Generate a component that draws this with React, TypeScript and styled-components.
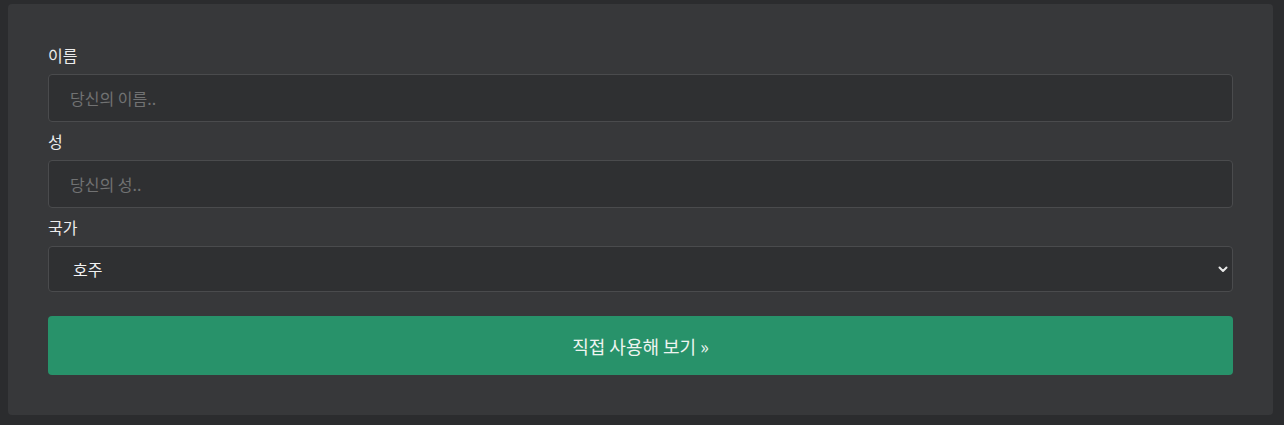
import styled, { createGlobalStyle } from "styled-components";

const GlobalStyle = createGlobalStyle`
  html, body {
    margin: 0;
    background: #2b2c2e;
  }
  body {
    padding: 4px 11px 0 8px;
    font-family: "Noto Sans CJK KR", "Noto Sans", sans-serif;
  }
`;

const Card = styled.form`
  background: #37383a;
  border-radius: 4px;
  padding: 40px;
  display: flex;
  flex-direction: column;
`;

const Label = styled.label`
  display: block;
  color: #ececec;
  font-size: 16px;
  line-height: 22px;
  margin-bottom: 8px;
`;

const Field = styled.div<{ $last?: boolean }>`
  margin-bottom: ${({ $last }) => ($last ? "24px" : "8px")};
`;

const TextInput = styled.input`
  box-sizing: border-box;
  width: 100%;
  height: 48px;
  background: #2f3032;
  border: 1px solid #4a4b4d;
  border-radius: 4px;
  padding: 0 21px;
  color: #e6e6e6;
  font-family: inherit;
  font-size: 16px;
  outline: none;

  &::placeholder {
    color: #717273;
  }
`;

const SelectWrap = styled.div`
  position: relative;
`;

const Select = styled.select`
  box-sizing: border-box;
  width: 100%;
  height: 46px;
  appearance: none;
  background: #2f3032;
  border: 1px solid #4a4b4d;
  border-radius: 4px;
  padding: 0 24px;
  color: #f2f2f2;
  font-family: inherit;
  font-size: 16px;
  outline: none;
`;

const Chevron = styled.svg`
  position: absolute;
  right: 5px;
  top: 18px;
  width: 10px;
  height: 10px;
  pointer-events: none;
`;

const Submit = styled.button`
  height: 59px;
  width: 100%;
  border: none;
  border-radius: 4px;
  background: #28926a;
  color: #eef4f0;
  font-family: inherit;
  font-size: 18px;
  cursor: pointer;
`;

export default function App() {
  return (
    <>
      <GlobalStyle />
      <Card onSubmit={(e) => e.preventDefault()}>
        <Field>
          <Label htmlFor="fname">이름</Label>
          <TextInput id="fname" placeholder="당신의 이름.." />
        </Field>
        <Field>
          <Label htmlFor="lname">성</Label>
          <TextInput id="lname" placeholder="당신의 성.." />
        </Field>
        <Field $last>
          <Label htmlFor="country">국가</Label>
          <SelectWrap>
            <Select id="country" defaultValue="australia">
              <option value="australia">호주</option>
              <option value="canada">캐나다</option>
              <option value="usa">미국</option>
            </Select>
            <Chevron viewBox="0 0 10 10">
              <path
                d="M1.5 3.5 L5 7 L8.5 3.5"
                fill="none"
                stroke="#e8e8e8"
                strokeWidth="2"
                strokeLinecap="round"
                strokeLinejoin="round"
              />
            </Chevron>
          </SelectWrap>
        </Field>
        <Submit type="submit">직접 사용해 보기 »</Submit>
      </Card>
    </>
  );
}
